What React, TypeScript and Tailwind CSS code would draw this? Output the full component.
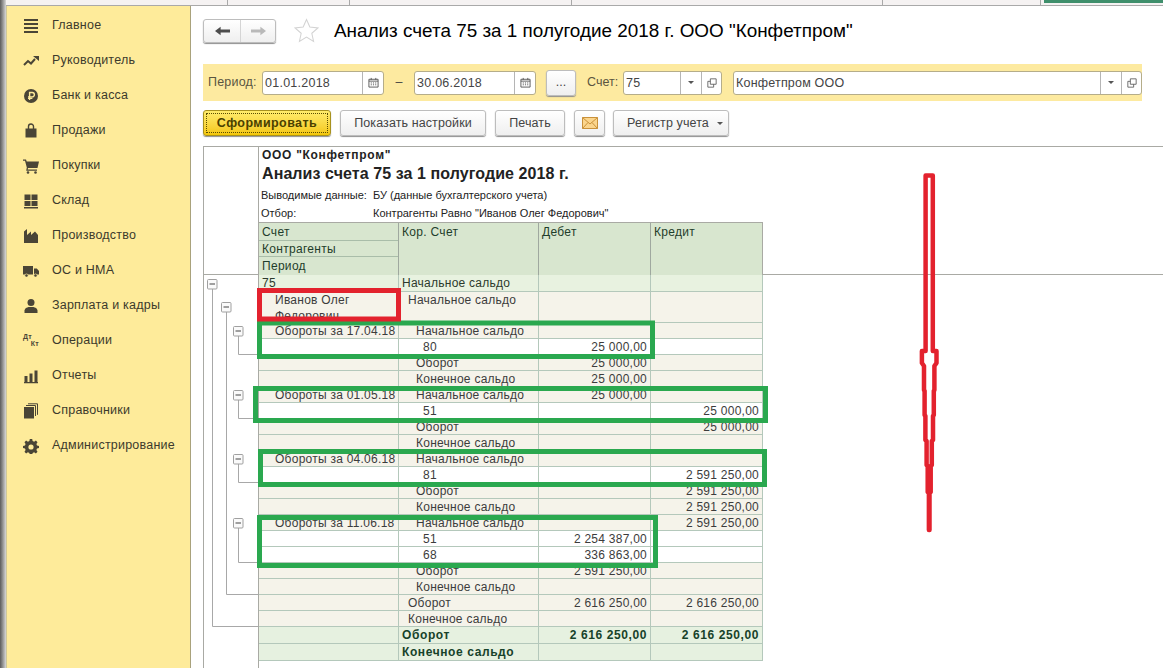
import type { ReactNode } from 'react';

const ink = '#4a4536';

function Svg({ children }: { children: ReactNode }) {
  return (
    <svg viewBox="0 0 16 16" className="w-4 h-4 shrink-0" fill={ink} stroke="none">
      {children}
    </svg>
  );
}

const navItems: { label: string; icon: ReactNode }[] = [
  { label: 'Главное', icon: <Svg><path d="M1 1h14v2H1zM1 5h14v2H1zM1 9h14v2H1zM1 13h14v2H1z" /></Svg> },
  { label: 'Руководитель', icon: <Svg><path d="M1 12l4-4 3 2.5L12 6" fill="none" stroke={ink} strokeWidth="2" /><path d="M10 3h6v5z" /></Svg> },
  { label: 'Банк и касса', icon: <Svg><circle cx="8" cy="8" r="7" /><path d="M6.6 12V4.5h2.6a2 2 0 010 4.4H5M5 10.4h4.4" fill="none" stroke="#feeb9a" strokeWidth="1.4" /></Svg> },
  { label: 'Продажи', icon: <Svg><path d="M2.5 5.5h11v9h-11z" /><path d="M5.5 7V3.5a2.5 2.5 0 015 0V7" fill="none" stroke={ink} strokeWidth="1.4" /></Svg> },
  { label: 'Покупки', icon: <Svg><path d="M0 1.5h3l.7 2H16l-1.5 6.5H5l-.3 1.5H14v1.3H3.2L3.8 9.5 2 2.8H0z" /><circle cx="5" cy="14.5" r="1.3" /><circle cx="12.5" cy="14.5" r="1.3" /></Svg> },
  { label: 'Склад', icon: <Svg><path d="M1.5 1.5h6v5.5h-6zM8.5 1.5h6v5.5h-6zM1.5 8h6v5h-6zM8.5 8h6v5h-6zM1 14h14v1.5H1z" /></Svg> },
  { label: 'Производство', icon: <Svg><path d="M1 15V3.5L4 1v6l4-3.5V7l4-3.5L15 7v8z" /></Svg> },
  { label: 'ОС и НМА', icon: <Svg><path d="M0 3h10v8.5H0zM11 5.5h2.8L16 8v3.5h-5z" /><circle cx="3.5" cy="12.5" r="1.6" stroke="#feeb9a" strokeWidth=".6" /><circle cx="12.5" cy="12.5" r="1.6" stroke="#feeb9a" strokeWidth=".6" /></Svg> },
  { label: 'Зарплата и кадры', icon: <Svg><circle cx="8" cy="4.5" r="3.5" /><path d="M1.5 15v-2.5c0-2 2.5-3.2 4-3.5h5c1.5.3 4 1.5 4 3.5V15z" /></Svg> },
  {
    label: 'Операции',
    icon: (
      <div className="w-4 h-4 shrink-0 flex flex-col text-[7px] leading-[7px] font-bold text-[#4a4536]">
        <span>Дт</span>
        <span className="self-end">Кт</span>
      </div>
    ),
  },
  { label: 'Отчеты', icon: <Svg><path d="M1.5 8h3v6h-3zM6.5 5.5h3V14h-3zM11.5 2.5h3V14h-3zM1 14h14v1.2H1z" /></Svg> },
  { label: 'Справочники', icon: <Svg><path d="M1 4h10v11.5H1z" /><path d="M3 2.5h9.5V13M5 .8h9.5v11" fill="none" stroke={ink} strokeWidth="1" /></Svg> },
  { label: 'Администрирование', icon: <Svg><path d="M6.8 1h2.4l.4 2 1.5.7 1.8-1.1 1.6 1.6-1.1 1.8.6 1.5 2 .4v2.2l-2 .4-.6 1.5 1.1 1.8-1.6 1.6-1.8-1.1-1.5.6-.4 2.1H6.8l-.4-2.1-1.5-.6-1.8 1.1-1.6-1.6 1.1-1.8-.6-1.5-2-.4V7.9l2-.4.6-1.5-1.1-1.8 1.6-1.6 1.8 1.1 1.5-.7z" /><circle cx="8" cy="9" r="2.6" fill="#feeb9a" /></Svg> },
];

function Sidebar() {
  return (
    <div className="w-[185px] shrink-0 bg-[#feeb9a] border-r border-[#a9a27c] border-l border-l-[#cfc89a] flex flex-col pt-[2px]">
      {navItems.map((item) => (
        <div key={item.label} className="h-[35px] flex items-center pl-[16px] gap-[13px] text-[12.5px] tracking-[0.22px] text-[#3c3a2c] whitespace-nowrap">
          {item.icon}
          <span>{item.label}</span>
        </div>
      ))}
    </div>
  );
}

function Calendar() {
  return (
    <svg viewBox="0 0 12 12" className="w-[11px] h-[11px]" fill="none" stroke="#555">
      <path d="M1 2.5h10v8.5H1z" />
      <path d="M1 4.5h10M3.5 1v2M8.5 1v2" />
      <path d="M3 6.5h1.2M5.4 6.5h1.2M7.8 6.5H9M3 8.5h1.2M5.4 8.5h1.2M7.8 8.5H9" />
    </svg>
  );
}

function OpenIcon() {
  return (
    <svg viewBox="0 0 12 12" className="w-[10px] h-[10px]" fill="none" stroke="#555">
      <path d="M4 1h7v6.5H4zM4 4H1v7h7V7.5" />
    </svg>
  );
}

function Caret() {
  return <div className="w-0 h-0 border-x-[3px] border-x-transparent border-t-[3px] border-t-[#555]" />;
}

function DateField({ value }: { value: string }) {
  return (
    <div className="w-[122px] h-6 bg-white border border-[#b5ad8a] rounded-[3px] flex items-center">
      <span className="w-[99px] pl-[2px] pt-px text-[12.5px] tracking-[0.25px] text-[#444]">{value}</span>
      <div className="flex-1 h-full border-l border-[#b5b5b5] flex items-center justify-center">
        <Calendar />
      </div>
    </div>
  );
}

function ChoiceField({ value, className }: { value: string; className: string }) {
  return (
    <div className={`h-6 bg-white border border-[#b5ad8a] rounded-[3px] flex items-center ${className}`}>
      <span className="flex-1 pl-[2px] pt-px text-[12.5px] tracking-[0.2px] text-[#444]">{value}</span>
      <div className="w-[21px] h-full border-l border-[#b5b5b5] flex items-center justify-center">
        <Caret />
      </div>
      <div className="w-[20px] h-full border-l border-[#b5b5b5] flex items-center justify-center">
        <OpenIcon />
      </div>
    </div>
  );
}

const btn =
  'h-[26px] bg-linear-to-b from-white to-[#efefef] border border-[#bdbdbd] rounded-[3px] shadow-[0_1px_1px_#8f8f8f] flex items-center justify-center text-[12.5px] tracking-[0.1px] text-[#444]';

function Toolbar() {
  return (
    <div className="mt-[9px] flex gap-[9px]">
      <div className="w-[128px] h-[26px] bg-linear-to-b from-[#ffec6a] to-[#f4c700] border border-[#a8921f] rounded-[3px] p-[2px] shadow-[0_1px_1px_#8f8f8f]">
        <div className="w-full h-full border border-dotted border-[#5a4d00] flex items-center justify-center text-[12.5px] font-bold tracking-[0.42px] text-[#4a4000]">
          Сформировать
        </div>
      </div>
      <div className={`${btn} w-[146px]`}>Показать настройки</div>
      <div className={`${btn} w-[70px]`}>Печать</div>
      <div className={`${btn} w-[31px]`}>
        <svg viewBox="0 0 16 12" className="w-4 h-3">
          <path d="M.5.5h15v11H.5z" fill="#fbd58c" stroke="#c9913a" />
          <path d="M.5.5L8 7l7.5-6.5M.5 11.5L6 5.5M15.5 11.5L10 5.5" fill="none" stroke="#c9913a" />
        </svg>
      </div>
      <div className={`${btn} w-[116px] ml-[-1px] pl-[8px] gap-[8px]`}>
        Регистр учета
        <Caret />
      </div>
    </div>
  );
}

type Row = {
  a?: string;
  b: string;
  d?: string;
  c?: string;
  indent: string;
  tone: 'level' | 'plain' | 'white' | 'total';
  h?: string;
};

const rows: Row[] = [
  { a: '75', b: 'Начальное сальдо', indent: 'pl-[3px]', tone: 'level', h: 'h-[17px]' },
  { a: 'Иванов Олег Федорович', b: 'Начальное сальдо', indent: 'pl-[9px]', tone: 'plain', h: 'h-[31px]' },
  { a: 'Обороты за 17.04.18', b: 'Начальное сальдо', indent: 'pl-[17px]', tone: 'plain' },
  { b: '80', d: '25 000,00', indent: 'pl-[24px]', tone: 'white' },
  { b: 'Оборот', d: '25 000,00', indent: 'pl-[17px]', tone: 'plain' },
  { b: 'Конечное сальдо', d: '25 000,00', indent: 'pl-[17px]', tone: 'plain' },
  { a: 'Обороты за 01.05.18', b: 'Начальное сальдо', d: '25 000,00', indent: 'pl-[17px]', tone: 'plain' },
  { b: '51', c: '25 000,00', indent: 'pl-[24px]', tone: 'white' },
  { b: 'Оборот', c: '25 000,00', indent: 'pl-[17px]', tone: 'plain' },
  { b: 'Конечное сальдо', indent: 'pl-[17px]', tone: 'plain' },
  { a: 'Обороты за 04.06.18', b: 'Начальное сальдо', indent: 'pl-[17px]', tone: 'plain' },
  { b: '81', c: '2 591 250,00', indent: 'pl-[24px]', tone: 'white' },
  { b: 'Оборот', c: '2 591 250,00', indent: 'pl-[17px]', tone: 'plain' },
  { b: 'Конечное сальдо', c: '2 591 250,00', indent: 'pl-[17px]', tone: 'plain' },
  { a: 'Обороты за 11.06.18', b: 'Начальное сальдо', c: '2 591 250,00', indent: 'pl-[17px]', tone: 'plain' },
  { b: '51', d: '2 254 387,00', indent: 'pl-[24px]', tone: 'white' },
  { b: '68', d: '336 863,00', indent: 'pl-[24px]', tone: 'white' },
  { b: 'Оборот', d: '2 591 250,00', indent: 'pl-[17px]', tone: 'plain' },
  { b: 'Конечное сальдо', indent: 'pl-[17px]', tone: 'plain' },
  { b: 'Оборот', d: '2 616 250,00', c: '2 616 250,00', indent: 'pl-[9px]', tone: 'plain' },
  { b: 'Конечное сальдо', indent: 'pl-[9px]', tone: 'plain' },
  { b: 'Оборот', d: '2 616 250,00', c: '2 616 250,00', indent: 'pl-[3px]', tone: 'total', h: 'h-[17px]' },
  { b: 'Конечное сальдо', indent: 'pl-[3px]', tone: 'total', h: 'h-[17px]' },
];

const toneClass = {
  level: 'bg-[#e8f2e0] text-[#2c3a2c] tracking-[0.25px]',
  plain: 'bg-[#f5f3ea] text-[#3c3c3c] tracking-[0.25px]',
  white: 'bg-white text-[#3c3c3c] tracking-[0.25px]',
  total: 'bg-[#e6f1e0] text-[#17422a] font-bold tracking-[0.6px]',
};

function ReportTable() {
  return (
    <div className="w-[504px] text-[12px] leading-[16px]">
      {rows.map((row, i) => (
        <div key={i} className={`flex ${row.h ?? 'h-[16px]'} border-b border-[#b4c8bb] overflow-hidden ${toneClass[row.tone]}`}>
          <div className={`w-[139px] shrink-0 ${row.a === '75' ? 'pl-[3px]' : 'pl-[16px]'}`}>{row.a}</div>
          <div className={`w-[140px] shrink-0 border-l border-[#b4c8bb] ${row.indent}`}>{row.b}</div>
          <div className="w-[112px] shrink-0 border-l border-[#b4c8bb] pr-[3px] text-right">{row.d}</div>
          <div className="w-[113px] shrink-0 border-x border-[#b4c8bb] pr-[3px] text-right">{row.c}</div>
        </div>
      ))}
    </div>
  );
}

function ReportHeader() {
  return (
    <div className="flex-1 flex flex-col h-full">
      <div className="h-[76px] pl-[2px] text-[#222]">
        <div className="pl-px pt-[1px] text-[12px] tracking-[0.7px] font-bold leading-[15px]">ООО "Конфетпром"</div>
        <div className="pl-px mt-[1px] text-[16px] tracking-[0.08px] font-bold leading-[20px]">Анализ счета 75 за 1 полугодие 2018 г.</div>
        <div className="flex mt-[2px] text-[11px] leading-[18px]">
          <span className="w-[112px]">Выводимые данные:</span>
          <span>БУ (данные бухгалтерского учета)</span>
        </div>
        <div className="flex text-[11px] leading-[18px]">
          <span className="w-[112px]">Отбор:</span>
          <span>Контрагенты Равно "Иванов Олег Федорович"</span>
        </div>
      </div>
      <div className="w-[504px] flex-1 flex bg-[#d8e6cf] border-t border-[#a9aaa4] border-r text-[12px] tracking-[0.3px] text-[#1f3d2b]">
        <div className="w-[139px] flex flex-col">
          <div className="h-[18px] border-b border-[#a9bda9] pl-[3px] leading-[19px]">Счет</div>
          <div className="h-[16px] border-b border-[#a9bda9] pl-[3px] leading-[17px]">Контрагенты</div>
          <div className="flex-1 pl-[3px] leading-[19px]">Период</div>
        </div>
        <div className="w-[140px] border-l border-[#9fa89f] pl-[3px] leading-[18px]">Кор. Счет</div>
        <div className="w-[112px] border-l border-[#9fa89f] pl-[3px] leading-[18px]">Дебет</div>
        <div className="w-[112px] border-l border-[#9fa89f] pl-[3px] leading-[18px]">Кредит</div>
      </div>
    </div>
  );
}

function Minus({ x, y }: { x: number; y: number }) {
  return (
    <g>
      <rect x={x} y={y} width="9.5" height="9.5" rx="1" fill="#fafafa" stroke="#a0a0a0" />
      <path d={`M${x + 2} ${y + 4.5}h5.5`} stroke="#444" />
    </g>
  );
}

// tree of collapse boxes, coordinates are local to the 55px gutter
function TreeLines() {
  const t = 275;
  const l = 204;
  const line = (d: string) => <path d={d} fill="none" stroke="#a8a8a8" />;
  return (
    <svg width="54" height="393" className="block">
      {line(`M${212.5 - l} ${288 - t}V${626.5 - t}H54`)}
      {line(`M${226.5 - l} ${312 - t}V${594.5 - t}H54`)}
      {line(`M${238.5 - l} ${335 - t}V${354.5 - t}H54`)}
      {line(`M${238.5 - l} ${400 - t}V${418.5 - t}H54`)}
      {line(`M${238.5 - l} ${464 - t}V${482.5 - t}H54`)}
      {line(`M${238.5 - l} ${527 - t}V${562.5 - t}H54`)}
      <Minus x={207.5 - l} y={279.5 - t} />
      <Minus x={221.5 - l} y={302.5 - t} />
      <Minus x={233.5 - l} y={326.5 - t} />
      <Minus x={233.5 - l} y={390.5 - t} />
      <Minus x={233.5 - l} y={454.5 - t} />
      <Minus x={233.5 - l} y={518.5 - t} />
    </svg>
  );
}

function Annotations() {
  return (
    <svg width="1163" height="668" className="absolute left-0 top-0 pointer-events-none">
      <g fill="none" stroke="#2aa84f" strokeWidth="5">
        <rect x="259.5" y="323" width="393" height="33.5" />
        <rect x="255.5" y="388.5" width="510" height="32" />
        <rect x="260.5" y="451.5" width="504" height="33" />
        <rect x="259.5" y="517.5" width="396" height="48" />
      </g>
      <rect x="259.5" y="290.5" width="139" height="28.5" fill="none" stroke="#e3222e" strokeWidth="5" />
      <path
        d="M925.6 175.5h7.2V351h3.7v12l-2.1 3v24l-.6 1v24l-.8 1v24l-1.2 1v24l-1.1 1v26l-1.2 1v37h-.6v-37l-1.2-1v-26l-1.1-1v-24l-1.2-1v-24l-.8-1v-24l-.6-1v-24l-2.1-3v-12h3.7z"
        fill="none"
        stroke="#e3222e"
        strokeWidth="4.5"
        strokeLinejoin="round"
      />
    </svg>
  );
}

export default function App() {
  return (
    <div className="relative w-[1163px] h-[668px] overflow-hidden bg-white flex font-['Liberation_Sans',Arial,sans-serif]">
      <div className="w-[6px] shrink-0 bg-linear-to-r from-[#5c5c5c] to-[#d8d8d8]" />
      <div className="flex-1 flex flex-col min-w-0">
        <div className="h-[6px] shrink-0 bg-[#f5f2f2] border-b border-[#a9a9a9] flex relative">
          <div className="w-[222px] border-r border-[#a9a9a9]" />
          <div className="w-[122px] border-r border-[#a9a9a9]" />
          <div className="w-[222px] border-r border-[#a9a9a9]" />
          <div className="w-[311px] border-r border-[#a9a9a9]" />
          <div className="w-[158px] border-r border-[#a9a9a9]" />
          <div className="flex-1 ml-[3px] h-[3px] bg-[#3f8f6c]" />
        </div>
        <div className="flex-1 flex min-h-0">
          <Sidebar />
          <div className="flex-1 min-w-0 pl-3 flex flex-col">
            <div className="mt-[13px] h-[23px] flex items-center">
              <div className="w-[73px] h-[24px] bg-linear-to-b from-white to-[#efefef] border border-[#bdbdbd] rounded-[3px] shadow-[0_1px_1px_#8f8f8f] flex">
                <div className="w-[37px] flex items-center justify-center border-r border-[#d5d5d5]">
                  <svg viewBox="0 0 16 10" className="w-[15px] h-[10px]" fill="#4d4d4d"><path d="M0 5l6-4.5V3.5h10v3H6v3z" /></svg>
                </div>
                <div className="flex-1 flex items-center justify-center">
                  <svg viewBox="0 0 16 10" className="w-[15px] h-[10px]" fill="#b9b9b9"><path d="M16 5l-6-4.5V3.5H0v3h10v3z" /></svg>
                </div>
              </div>
              <svg viewBox="0 0 24 24" className="w-[25px] h-[25px] ml-[18px]" fill="none" stroke="#d3d3d3" strokeWidth="1"><path d="M12 1.5l3.2 7.2 7.8.8-5.9 5.2 1.7 7.7-6.8-4-6.8 4 1.7-7.7L1 9.5l7.8-.8z" /></svg>
              <h1 className="ml-[15px] pt-[2px] text-[18.9px] text-black whitespace-nowrap">Анализ счета 75 за 1 полугодие 2018 г. ООО "Конфетпром"</h1>
            </div>
            <div className="mt-[22px] h-[37px] mr-[21px] bg-[#fdeaa0] flex items-center">
              <span className="ml-[5px] w-[54px] text-[12.5px] tracking-[0.2px] text-[#5a5540]">Период:</span>
              <DateField value="01.01.2018" />
              <span className="w-[30px] text-center text-[12.5px] text-[#444]">–</span>
              <DateField value="30.06.2018" />
              <div className={`${btn} w-[30px] ml-[10px] text-[11px]`}>...</div>
              <span className="ml-[11px] w-[36px] text-[12.5px] text-[#5a5540]">Счет:</span>
              <ChoiceField value="75" className="w-[99px]" />
              <ChoiceField value="Конфетпром ООО" className="w-[409px] ml-[11px]" />
            </div>
            <Toolbar />
            <div className="mt-[10px] flex-1 min-h-0 flex flex-col border-t border-l border-[#a9aaa4] overflow-hidden">
              <div className="h-[128px] shrink-0 flex border-b border-[#a9aaa4]">
                <div className="w-[55px] shrink-0 border-r border-[#a9aaa4]" />
                <ReportHeader />
              </div>
              <div className="flex-1 flex min-h-0">
                <div className="w-[55px] shrink-0 border-r border-[#a9aaa4]">
                  <TreeLines />
                </div>
                <ReportTable />
              </div>
            </div>
          </div>
        </div>
      </div>
      <Annotations />
    </div>
  );
}
